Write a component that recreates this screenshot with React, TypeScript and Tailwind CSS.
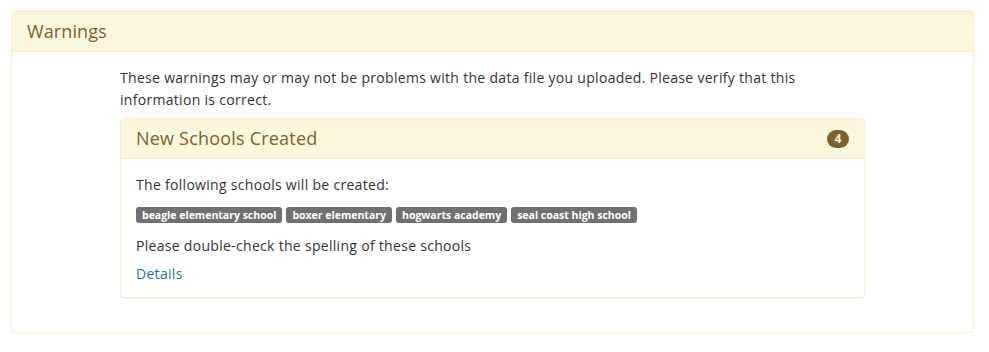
import React from 'react';

const schools = ['beagle elementary school', 'boxer elementary', 'hogwarts academy', 'seal coast high school'];

export default function App() {
  return (
    <div className="min-h-screen bg-white pl-[11px] pr-[15px] pt-[11px] text-[14px] tracking-[0.3px] text-[#333] [font-family:'Open_Sans',sans-serif]">
      <div className="rounded-[4px] border border-[#faebcc] bg-white">
        <div className="flex h-[40px] items-center border-b border-[#faebcc] bg-[#fcf6dd] px-[15px] text-[18px] tracking-[0.1px] text-[#7e6130]">
          Warnings
        </div>
        <div className="pl-[108px] pr-[108px] pt-[15px] pb-[34px]">
          <p className="mb-[7px] leading-[22px]">
            These warnings may or may not be problems with the data file you uploaded. Please verify that this
            information is correct.
          </p>
          <div className="rounded-[4px] border border-[#faebcc] bg-white shadow-[0_1px_1px_rgba(0,0,0,0.05)]">
            <div className="flex h-[40px] items-center justify-between border-b border-[#faebcc] bg-[#fcf6dd] px-[15px] text-[18px] tracking-[0.2px] text-[#7e6130]">
              <span>New Schools Created</span>
              <span className="flex h-[18px] min-w-[22px] items-center justify-center rounded-full bg-[#7e6130] px-[7px] text-[12px] font-bold tracking-normal text-[#fcf6dd]">
                4
              </span>
            </div>
            <div className="px-[15px] pt-[15px] pb-[12px]">
              <p className="mb-[11px] leading-[22px]">The following schools will be created:</p>
              <div className="flex flex-wrap gap-[4px]">
                {schools.map((s) => (
                  <span
                    key={s}
                    className="rounded-[3px] bg-[#707070] px-[6px] text-[10.5px] leading-[16px] font-bold tracking-normal text-white"
                  >
                    {s}
                  </span>
                ))}
              </div>
              <p className="mt-[12px] leading-[22px]">Please double-check the spelling of these schools</p>
              <a href="#" className="mt-[6px] block leading-[22px] text-[#1f6fa8]">
                Details
              </a>
            </div>
          </div>
        </div>
      </div>
    </div>
  );
}
